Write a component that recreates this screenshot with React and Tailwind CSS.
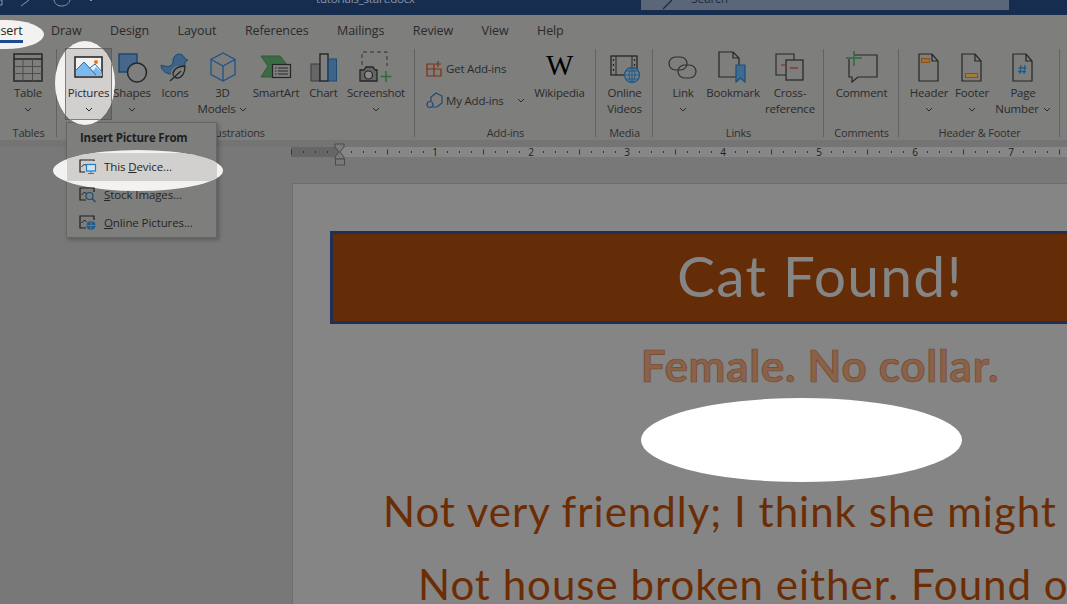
const ui = { fontFamily: '"Open Sans", sans-serif' };

const Chevron = ({ className = "" }) => (
  <svg width="8" height="5" viewBox="0 0 8 5" className={className}>
    <path d="M1 1l3 3 3-3" fill="none" stroke="#2a2a2a" strokeWidth="1" />
  </svg>
);

const Ico = ({ children, w = 32, h = 32, className = "" }) => (
  <svg width={w} height={h} viewBox={`0 0 ${w} ${h}`} className={className} fill="none">
    {children}
  </svg>
);

const ink = "#262626";
const blue = "#1d4a75";

const TableIcon = () => (
  <Ico w={30} h={30}>
    <rect x="1" y="1" width="28" height="27" stroke={ink} strokeWidth="1.5" />
    <path d="M1 6h28" stroke={ink} strokeWidth="1.5" />
    <path d="M1 13.5h28M1 20.5h28M10 6v22M19.500 6v22" stroke="#4c4c4c" />
  </Ico>
);

const PicturesIcon = () => (
  <Ico w={30} h={24} className="mb-[3px]">
    <rect x="1" y="1" width="27" height="20" fill="#f2f2f2" stroke="#1f1f1f" strokeWidth="1.5" />
    <path d="M2 20v-6l8-8 9 9 3-4 6 6v3z" fill="#7db9ec" />
    <path d="M2 14l8-8 12 13M16 12l5-4 7 8" stroke="#2a6cad" strokeWidth="1" />
    <circle cx="22" cy="6" r="2" fill="#e8791d" />
  </Ico>
);

const ShapesIcon = () => (
  <Ico w={30} h={30} className="ml-[2px]">
    <rect x="1" y="1" width="18" height="18" fill="#44678a" stroke={blue} strokeWidth="1.5" />
    <circle cx="19" cy="19.500" r="9.500" fill="#7e7e7e" stroke={ink} strokeWidth="1.5" />
  </Ico>
);

const IconsIcon = () => (
  <Ico w={30} h={32}>
    <path
      d="M1 14c3 1 6 2 9 1 2-1 3-3 3-5 0-4 3-7 6-7s5 2 6 5l3 1-3 2c0 3-1 5-3 6-4 3-7 7-12 6-6-1-9-5-9-9z"
      fill="#3d6389"
      stroke={blue}
    />
    <circle cx="19" cy="23" r="8" fill="#7e7e7e" />
    <path d="M25 15c-5 0-11 2-12 7 0 3 2 5 4 5 5 0 8-5 8-12zM21 20l-11 10" stroke={ink} strokeWidth="1.300" />
  </Ico>
);

const CubeIcon = () => (
  <Ico w={28} h={32}>
    <path d="M14 2l12 6.500v15L14 30 2 23.500v-15zM2 8.500L14 15l12-6.500M14 15v15" stroke="#1d5488" strokeWidth="1.300" />
  </Ico>
);

const SmartArtIcon = () => (
  <Ico w={32} h={26} className="mb-[2px]">
    <path d="M1 1h19l8 10-8 11H1l7-11z" fill="#3d6a46" stroke="#2b5a35" />
    <rect x="12.500" y="9.500" width="18" height="13" fill="#7e7e7e" stroke={ink} strokeWidth="1.200" />
    <path d="M15 13h1.500M18 13h10M15 16h1.500M18 16h10M15 19h1.500M18 19h10" stroke={ink} />
  </Ico>
);

const ChartIcon = () => (
  <Ico w={28} h={30}>
    <rect x="1" y="11" width="9" height="17" fill="#666" stroke="#3a3a3a" />
    <rect x="10" y="1" width="8" height="27" fill="#808080" stroke="#1f1f1f" strokeWidth="1.300" />
    <rect x="18.500" y="6" width="8" height="22" fill="#3f648a" stroke={blue} />
  </Ico>
);

const ScreenshotIcon = () => (
  <Ico w={34} h={32}>
    <path d="M3 14V1h25v14" stroke="#333" strokeDasharray="4 3" />
    <path d="M1 19h4l2-3h7l2 3h2v11H1z" fill="#666" stroke={ink} strokeWidth="1.300" />
    <circle cx="9.500" cy="24" r="4" fill="#8a8a8a" stroke={ink} strokeWidth="1.200" />
    <path d="M27 20v11M21.500 25.500h11" stroke="#2c6b3d" strokeWidth="1.500" />
  </Ico>
);

const GetAddinsIcon = () => (
  <Ico w={17} h={16}>
    <path d="M8 3H1v12h14V8H8zM8 8H1M8 8v7" stroke="#7c3012" strokeWidth="1.200" />
    <path d="M12 0v6M9 3h6" stroke="#7c3012" strokeWidth="1.200" />
  </Ico>
);

const MyAddinsIcon = () => (
  <Ico w={17} h={17}>
    <path d="M5 9V5l5-4 6 3v7l-5 4H7" stroke={blue} strokeWidth="1.200" />
    <circle cx="4" cy="12.500" r="3" stroke={blue} strokeWidth="1.200" />
  </Ico>
);

const VideosIcon = () => (
  <Ico w={30} h={30} className="-mb-[2px]">
    <rect x="1" y="1" width="26" height="19" stroke={ink} strokeWidth="1.300" />
    <path d="M6 1v19M22 1v19" stroke={ink} />
    <path d="M3.500 4v2M3.500 9v2M3.500 14v2M24.500 4v2M24.500 9v2" stroke={ink} strokeWidth="1.300" />
    <circle cx="22" cy="20" r="7.500" fill="#7e7e7e" stroke="#1d5c8c" strokeWidth="1.300" />
    <path d="M14.500 20h15M22 12.500v15M16 16h12M16 24h12M22 12.500c-4 4-4 11 0 15M22 12.500c4 4 4 11 0 15" stroke="#1d5c8c" />
  </Ico>
);

const LinkIcon = () => (
  <Ico w={30} h={24} className="mb-[3px]">
    <rect x="1" y="1" width="18" height="13" rx="6.500" stroke="#303030" strokeWidth="1.200" />
    <rect x="10" y="9" width="18" height="13" rx="6.500" stroke="#303030" strokeWidth="1.200" />
  </Ico>
);

const BookmarkIcon = () => (
  <Ico w={30} h={32}>
    <path d="M1 1h14l6 6v19H1zM15 1v6h6" stroke={ink} strokeWidth="1.200" />
    <path d="M18 14h9v17l-4.500-4-4.500 4z" fill="#3e6b91" stroke="#1c4f7c" strokeWidth="1.200" />
  </Ico>
);

const CrossRefIcon = () => (
  <Ico w={30} h={30}>
    <path d="M11 22H1V1h18v6" stroke={ink} strokeWidth="1.100" />
    <rect x="11" y="7" width="17" height="20" stroke={ink} strokeWidth="1.200" />
    <path d="M6 12h4" stroke="#8f2a2a" strokeWidth="1.200" />
    <path d="M15 15h8" stroke="#8f2a2a" strokeWidth="1.300" />
  </Ico>
);

const CommentIcon = () => (
  <Ico w={32} h={32}>
    <path d="M3 8v18h3v5l6-5h19V4H8" stroke={ink} strokeWidth="1.200" />
    <path d="M8 0v15M0 7h16" stroke="#2e6b3f" strokeWidth="1.500" />
  </Ico>
);

const DocIcon = ({ children }) => (
  <Ico w={22} h={30}>
    <path d="M1 1h13l6 7v20H1zM14 1v7h6" stroke={ink} strokeWidth="1.200" />
    {children}
  </Ico>
);

const Btn = ({ width, icon, lines, chev, chevInline }) => (
  <div className={`relative z-20 flex flex-col items-center shrink-0 ${width}`}>
    <div className="h-[41px] flex items-end justify-center pb-[2px]">{icon}</div>
    {lines.map((l, i) => (
      <div key={l} className="h-[16px] leading-[16px] whitespace-nowrap flex items-center gap-[4px]">
        {l}
        {chevInline && i === lines.length - 1 && <Chevron />}
      </div>
    ))}
    {chev && <div className="h-[16px] flex items-center"><Chevron /></div>}
  </div>
);

const Group = ({ width, label, children, className = "" }) => (
  <div className={`relative shrink-0 h-[96px] ${width}`}>
    <div className={`flex h-[76px] ${className}`}>{children}</div>
    <div className="absolute left-0 right-0 top-[81px] text-center text-[#303030] text-[11px] leading-[16px]">{label}</div>
    <div className="absolute right-0 top-[5px] bottom-[3px] w-px bg-[#626262]" />
  </div>
);

function Ruler() {
  const ticks = [];
  for (let x = 0; x < 780; x += 12) ticks.push(x);
  return (
    <svg width="776" height="10" viewBox="0 0 776 10" className="overflow-visible block">
      {ticks.map((x) =>
        (x + 48) % 96 === 0 ? null : x % 96 === 0 ? (
          <path key={x} d={`M${x + 0.5} 2.500v5`} stroke="#333" />
        ) : (
          <path key={x} d={`M${x + 0.5} 4v2`} stroke="#333" />
        )
      )}
      {[1, 2, 3, 4, 5, 6, 7].map((n) => (
        <text key={n} x={48 + 96 * n} y="9" textAnchor="middle" fontSize="10" fill="#1c1c1c" fontFamily="Open Sans, sans-serif">
          {n}
        </text>
      ))}
      <path d="M44 -3h9v3l-4 5 4 5v2h-9v-2l4-5-4-5z" fill="#7a7a7a" stroke="#4a4a4a" />
      <rect x="44.500" y="12" width="9" height="6" fill="#7a7a7a" stroke="#4a4a4a" />
    </svg>
  );
}

const DeviceIcon = () => (
  <Ico w={18} h={16}>
    <path d="M15 2V1H1v12h5" stroke="#1f1f1f" strokeWidth="1.200" />
    <path d="M2.500 8l3-3 2 2" stroke="#1f1f1f" />
    <rect x="7.500" y="5.500" width="9" height="6.500" fill="#cfe4f7" stroke="#1f7fc8" strokeWidth="1.200" />
    <path d="M9 14.500h6M12 12v2.500" stroke="#1f7fc8" />
  </Ico>
);

const StockIcon = () => (
  <Ico w={18} h={16}>
    <path d="M15 5V1H1v12h6" stroke="#1f1f1f" strokeWidth="1.200" />
    <path d="M2.500 8l3-3 2 2" stroke="#1f1f1f" />
    <circle cx="10.500" cy="9" r="3.500" stroke={blue} strokeWidth="1.200" />
    <path d="M13 11.500l3.500 3.500" stroke={blue} strokeWidth="1.400" />
  </Ico>
);

const OnlineIcon = () => (
  <Ico w={18} h={16}>
    <path d="M15 5V1H1v12h6" stroke="#1f1f1f" strokeWidth="1.200" />
    <path d="M2.500 8l3-3 2 2" stroke="#1f1f1f" />
    <circle cx="12" cy="10.500" r="4.500" fill="#1d5c8c" />
    <path d="M7.500 10.500h9M12 6v9" stroke="#7e7e7e" strokeWidth="0.800" />
  </Ico>
);

const MenuRow = ({ icon, before = "", first, rest }) => (
  <div className="relative z-20 h-[28px] flex items-center pl-[12px] gap-[7px] text-[11.500px] text-[#262626]">
    {icon}
    <span className="tracking-[-0.1px]">
      {before}
      <span className="underline">{first}</span>
      {rest}
    </span>
  </div>
);

export default function App() {
  return (
    <div style={ui} className="relative w-[1067px] h-[604px] overflow-hidden bg-[#787878] text-[11.500px] text-[#2a2a2a] tracking-[-0.2px]">
      {/* title bar */}
      <div className="h-[15px] bg-[#162d50] flex overflow-hidden">
        <svg width="100" height="15" viewBox="0 0 100 15" className="shrink-0" fill="none">
          <path d="M0 0h2v5H0" stroke="#8d97a8" />
          <path d="M21 6l8-6" stroke="#8d97a8" />
          <path d="M54 0c1 8 14 8 16 0" stroke="#8d97a8" />
          <path d="M90 0l1 1 1-1" stroke="#8d97a8" />
        </svg>
        <div className="ml-[216px] -mt-[9px] text-[11.500px] leading-[16px] text-[#8d97a8] whitespace-nowrap w-[325px]">tutorials_start.docx</div>
        <div className="h-[10px] w-[368px] bg-[#5b6779] flex overflow-hidden shrink-0">
          <svg width="16" height="10" className="ml-[21px] shrink-0" fill="none">
            <path d="M1 9l5-5M6 4l4-4" stroke="#1f2a3d" strokeWidth="1.300" />
          </svg>
          <div className="ml-[13px] -mt-[9px] text-[12px] leading-[16px] text-[#1f2a3d]">Search</div>
        </div>
      </div>

      {/* tabs */}
      <div className="h-[29px] bg-[#7e7e7d] flex items-start gap-[28.5px] -ml-[10.5px] pt-[7px] text-[12.500px] leading-[17px] text-[#2a2a2a] tracking-[-0.1px] w-[1078px]">
        <div className="relative z-20 text-[#242424]">
          Insert
          <div className="absolute left-0 right-0 top-[18px] h-[3px] bg-[#1c4a90]" />
        </div>
        <div>Draw</div>
        <div>Design</div>
        <div>Layout</div>
        <div>References</div>
        <div>Mailings</div>
        <div>Review</div>
        <div>View</div>
        <div>Help</div>
      </div>

      {/* ribbon */}
      <div className="h-[96px] bg-[#7e7e7d] flex">
        <Group width="w-[57px]" label="Tables">
          <Btn width="w-[56px]" icon={<TableIcon />} lines={["Table"]} chev />
        </Group>
        <Group width="w-[358px]" label="Illustrations" className="pl-[8px]">
          <div className="absolute left-[8px] top-[4px] w-[47px] h-[72px] border border-[#5c5c5c] bg-[#6d6d6c]" />
          <Btn width="w-[47px]" icon={<PicturesIcon />} lines={["Pictures"]} chev />
          <Btn width="w-[40px]" icon={<ShapesIcon />} lines={["Shapes"]} chev />
          <Btn width="w-[46px]" icon={<IconsIcon />} lines={["Icons"]} />
          <Btn width="w-[49px]" icon={<CubeIcon />} lines={["3D", "Models"]} chevInline />
          <Btn width="w-[58px]" icon={<SmartArtIcon />} lines={["SmartArt"]} />
          <Btn width="w-[37px]" icon={<ChartIcon />} lines={["Chart"]} />
          <Btn width="w-[68px]" icon={<ScreenshotIcon />} lines={["Screenshot"]} chev />
        </Group>
        <Group width="w-[181px]" label="Add-ins" className="pl-[11px]">
          <div className="w-[99px] shrink-0 pt-[16px] flex flex-col gap-[15px]">
            <div className="h-[17px] flex items-center gap-[3px]">
              <GetAddinsIcon />
              Get Add-ins
            </div>
            <div className="h-[17px] flex items-center gap-[3px]">
              <MyAddinsIcon />
              My Add-ins
              <Chevron className="ml-[10px]" />
            </div>
          </div>
          <div className="w-[69px] shrink-0 flex flex-col items-center">
            <div className="h-[41px] flex items-end pb-[5px] text-[29px] leading-[29px] text-black" style={{ fontFamily: '"Liberation Serif", serif' }}>
              W
            </div>
            <div className="h-[16px] leading-[16px]">Wikipedia</div>
          </div>
        </Group>
        <Group width="w-[57px]" label="Media">
          <Btn width="w-[57px]" icon={<VideosIcon />} lines={["Online", "Videos"]} />
        </Group>
        <Group width="w-[171px]" label="Links" className="pl-[7px]">
          <Btn width="w-[46px]" icon={<LinkIcon />} lines={["Link"]} chev />
          <Btn width="w-[54px]" icon={<BookmarkIcon />} lines={["Bookmark"]} />
          <Btn width="w-[60px]" icon={<CrossRefIcon />} lines={["Cross-", "reference"]} />
        </Group>
        <Group width="w-[75px]" label="Comments">
          <Btn width="w-[75px]" icon={<CommentIcon />} lines={["Comment"]} />
        </Group>
        <Group width="w-[161px]" label="Header & Footer" className="pl-[9px]">
          <Btn
            width="w-[42px]"
            icon={
              <DocIcon>
                <rect x="3.500" y="5.500" width="8" height="4" fill="#9a7434" stroke="#8f4e14" />
              </DocIcon>
            }
            lines={["Header"]}
            chev
          />
          <Btn
            width="w-[44px]"
            icon={
              <DocIcon>
                <rect x="4.500" y="20.500" width="12" height="4" fill="#9e7e3a" stroke="#8f4e14" />
              </DocIcon>
            }
            lines={["Footer"]}
            chev
          />
          <Btn
            width="w-[58px]"
            icon={
              <DocIcon>
                <path d="M9 12l-1 9M13 12l-1 9M6.500 15h8M6 18.500h8" stroke="#1d5c8c" strokeWidth="1.300" />
              </DocIcon>
            }
            lines={["Page", "Number"]}
            chevInline
          />
        </Group>
      </div>

      {/* ruler strip */}
      <div className="h-[7px] bg-[#747474]" />
      <div className="h-[10px] flex pl-[291px]">
        <div className="relative w-[776px] h-[10px] flex shrink-0">
          <div className="w-[47px] bg-[#666666]" />
          <div className="flex-1 bg-[#878787]" />
          <div className="absolute inset-0">
            <Ruler />
          </div>
        </div>
      </div>

      {/* document page */}
      <div className="ml-[292px] mt-[26px] w-[1100px] h-[500px] bg-[#858585] border border-[#6c6c6c] pt-[47px] pl-[37px]" style={{ fontFamily: "Lato, sans-serif" }}>
        <div className="w-[980px] h-[93px] bg-[#642c07] border-[3px] border-[#1f2f55] flex justify-center items-center pb-[6px] text-[57px] leading-[70px] text-[#858585] tracking-[1.2px]">
          Cat Found!
        </div>
        <div className="w-[980px] mt-[14px] h-[54px] text-center text-[44px] leading-[54px] font-bold text-[#8a6249] tracking-[0.7px] [-webkit-text-stroke:0.7px_#74472c]">
          Female. No collar.
        </div>
        <div className="ml-[311px] mt-[6px] w-[321px] h-[84px] rounded-[50%] bg-white" />
        <div className="ml-[53px] h-[58px] text-[42px] leading-[58px] text-[#6c2d05] whitespace-nowrap tracking-[1px]">
          Not very friendly; I think she might
        </div>
        <div className="ml-[88px] mt-[15px] h-[58px] text-[42px] leading-[58px] text-[#6c2d05] whitespace-nowrap tracking-[1px]">
          Not house broken either. Found o
        </div>
      </div>

      {/* Insert Picture From menu */}
      <div className="absolute left-[66px] top-[122px] w-[151px] h-[116px] bg-[#7e7e7d] border border-[#666666] shadow-[2px_2px_4px_rgba(0,0,0,0.25)]">
        <div className="h-[30px] pl-[13px] flex items-center font-bold text-[11.500px] text-[#1f1f1f]">Insert Picture From</div>
        <MenuRow icon={<DeviceIcon />} before="This " first="D" rest="evice..." />
        <MenuRow icon={<StockIcon />} first="S" rest="tock Images..." />
        <MenuRow icon={<OnlineIcon />} first="O" rest="nline Pictures..." />
      </div>

      {/* spotlights */}
      <div className="absolute z-10 left-[-34px] top-[20px] w-[78px] h-[29px] rounded-[50%] bg-[#f3f2f1]" />
      <div className="absolute z-10 left-[55px] top-[41px] w-[60px] h-[84px] rounded-[50%] bg-[#f3f2f1] overflow-hidden">
        <div className="ml-[10px] mt-[7px] w-[47px] h-[72px] bg-[#d2d0ce] border border-[#7d7d7d]" />
      </div>
      <div className="absolute z-10 left-[53px] top-[150px] w-[170px] h-[41px] rounded-[50%] bg-[#f3f2f1] overflow-hidden">
        <div className="ml-[14px] mt-[3px] w-[150px] h-[28px] bg-[#d2d0ce]" />
      </div>
    </div>
  );
}
